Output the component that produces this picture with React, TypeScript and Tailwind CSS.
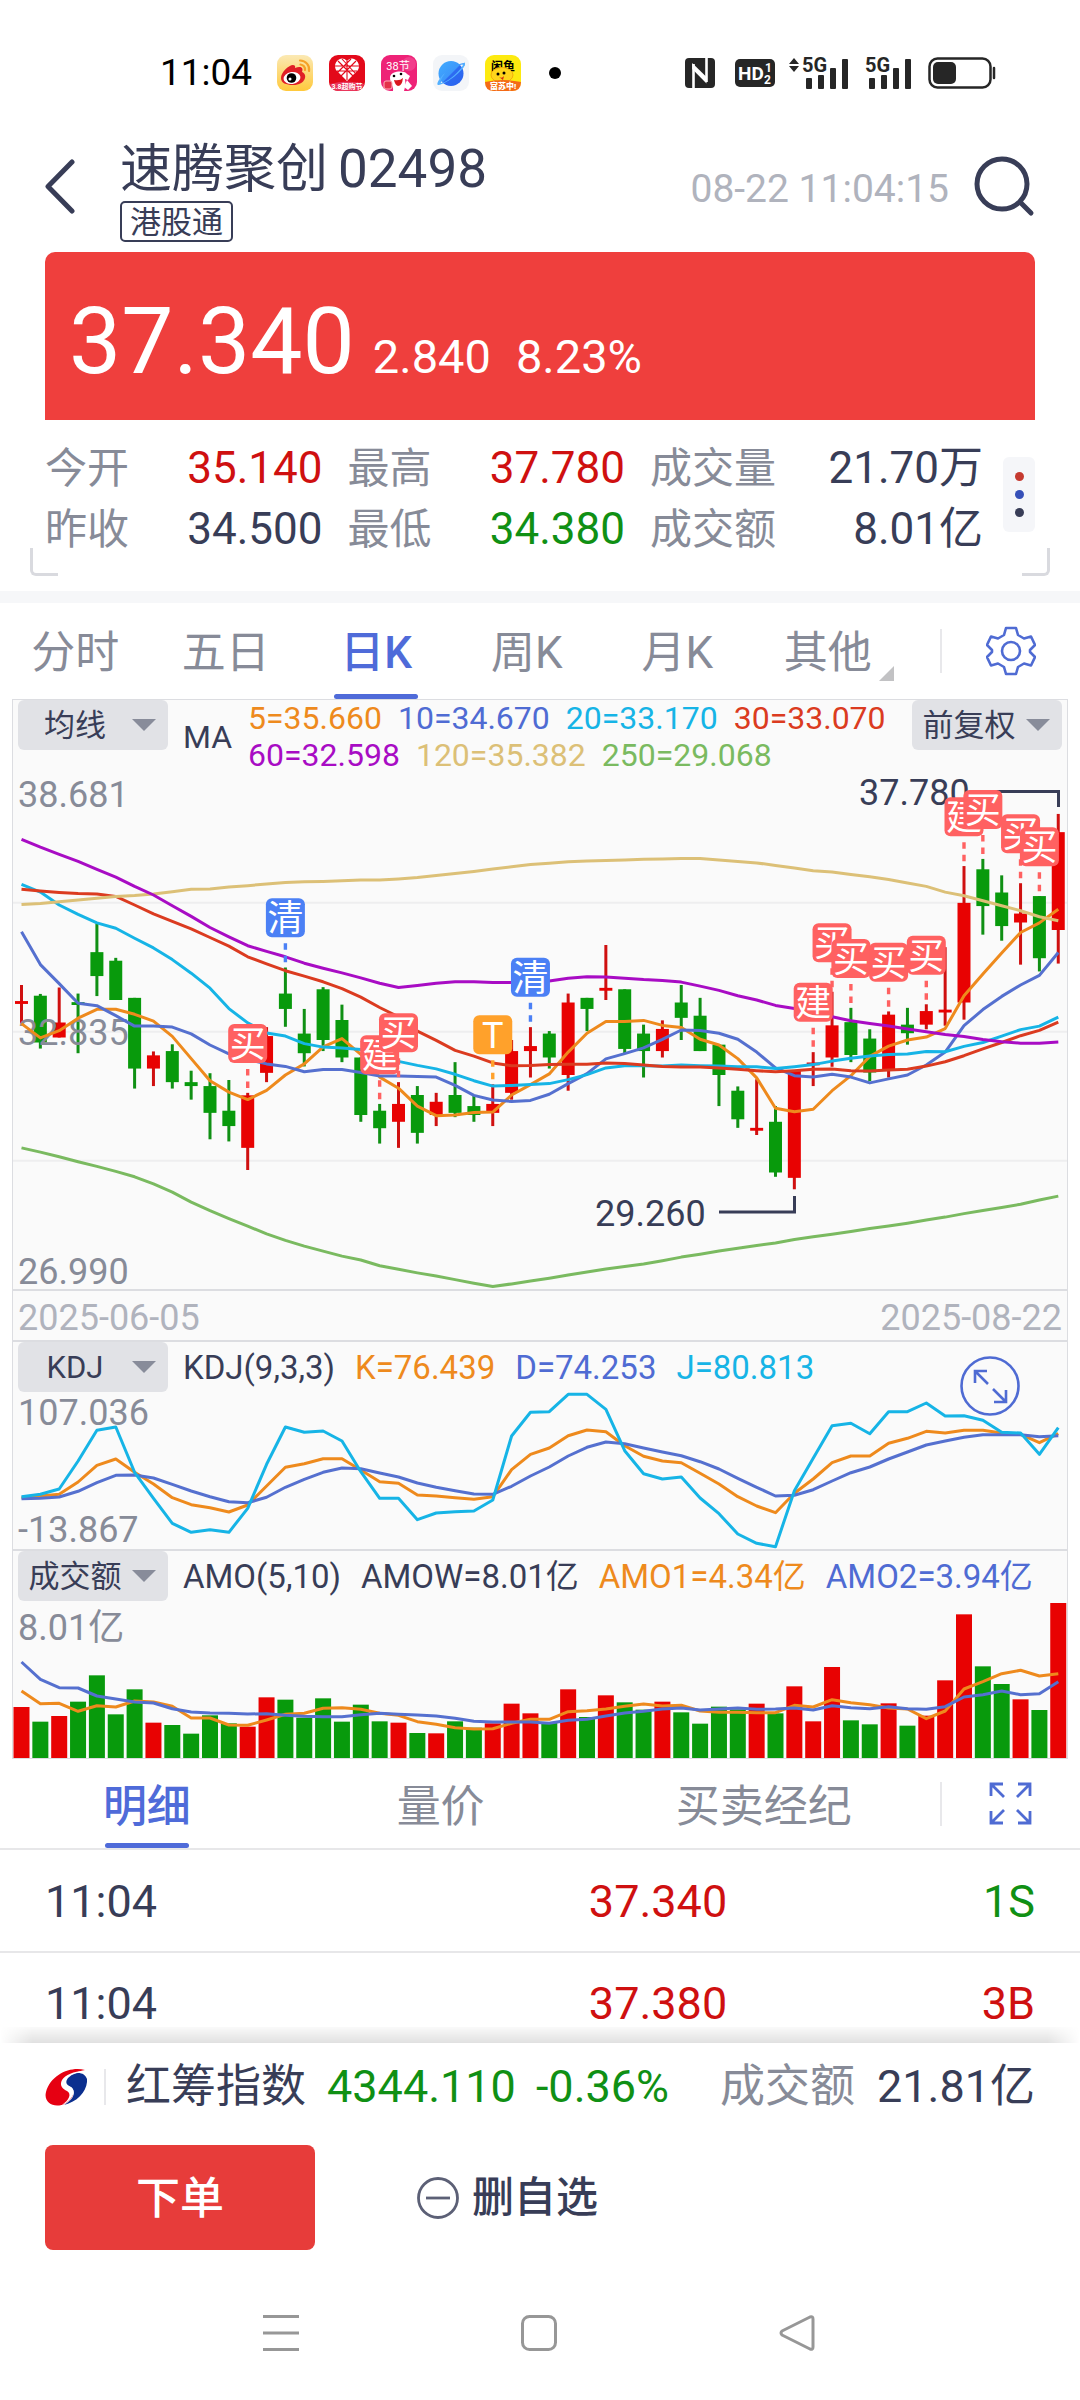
import React from "react";

type Candle = [number, number, number, number, 0 | 1];

// [high, body top, body bottom, low, rising] measured down the price panel
const candles: Candle[] = [
  [574, 619, 627, 682, 1], [599, 604, 735, 752, 0], [581, 679, 721, 721, 1], [598, 622, 630, 765, 0],
  [402, 482, 549, 605, 0], [498, 506, 616, 616, 0], [610, 610, 808, 864, 0], [760, 771, 808, 857, 1],
  [740, 759, 846, 864, 0], [814, 846, 857, 895, 0], [821, 857, 932, 1006, 0], [840, 926, 969, 1012, 0],
  [876, 883, 1030, 1092, 1], [692, 717, 820, 846, 1], [525, 598, 641, 691, 0], [641, 710, 765, 802, 0],
  [580, 586, 728, 759, 0], [629, 672, 777, 790, 0], [777, 777, 938, 957, 0], [907, 926, 975, 1018, 0],
  [846, 907, 957, 1030, 1], [857, 882, 988, 1018, 0], [876, 901, 938, 969, 1], [790, 882, 932, 944, 0],
  [882, 913, 938, 957, 0], [852, 907, 932, 969, 1], [728, 759, 876, 895, 1], [692, 745, 759, 833, 1],
  [703, 710, 777, 808, 0], [598, 623, 826, 870, 1], [610, 610, 641, 703, 0], [462, 582, 590, 616, 1],
  [586, 586, 753, 765, 0], [685, 710, 759, 833, 0], [673, 697, 759, 777, 1], [574, 623, 666, 728, 0],
  [610, 660, 759, 759, 0], [741, 741, 826, 913, 0], [858, 870, 950, 974, 0], [838, 974, 982, 994, 1],
  [913, 957, 1099, 1111, 0], [815, 815, 1114, 1146, 1], [762, 791, 799, 857, 1], [593, 687, 777, 803, 1],
  [638, 678, 770, 790, 0], [698, 724, 819, 843, 0], [648, 657, 811, 833, 1], [638, 685, 709, 741, 0],
  [628, 647, 685, 698, 1], [468, 643, 651, 688, 1], [241, 344, 623, 671, 1], [221, 250, 353, 433, 0],
  [267, 315, 409, 450, 0], [289, 374, 399, 517, 1], [325, 325, 499, 536, 0], [95, 146, 420, 514, 1],
];

const movingAverages: { color: string; points: number[] }[] = [
  {
    color: "#ee8a1d",
    points: [682, 722, 702, 667, 642, 642, 656, 675, 718, 780, 842, 874, 895, 869, 826, 795, 747, 724, 768, 832, 863, 913, 940, 938, 931, 930, 882, 853, 823, 762, 709, 676, 676, 673, 687, 693, 726, 742, 780, 834, 919, 929, 922, 870, 828, 774, 745, 728, 720, 696, 604, 543, 484, 427, 400, 362],
  },
  {
    color: "#5570cf",
    points: [425, 517, 570, 625, 632, 660, 689, 689, 692, 711, 742, 767, 782, 795, 802, 817, 811, 811, 819, 829, 829, 830, 832, 855, 883, 896, 900, 897, 880, 850, 822, 781, 766, 750, 726, 700, 701, 709, 726, 762, 806, 828, 832, 824, 832, 848, 837, 826, 798, 762, 688, 643, 606, 574, 547, 483],
  },
  {
    color: "#16b4e6",
    points: [292, 314, 350, 376, 400, 415, 443, 470, 503, 541, 583, 640, 680, 708, 717, 738, 748, 750, 755, 765, 788, 799, 809, 824, 842, 857, 855, 853, 850, 839, 825, 806, 800, 800, 801, 798, 800, 801, 803, 803, 808, 803, 797, 787, 779, 773, 769, 767, 760, 761, 746, 735, 717, 699, 689, 664],
  },
  {
    color: "#db3b20",
    points: [306, 311, 315, 318, 319, 326, 350, 375, 396, 417, 441, 465, 495, 515, 534, 549, 565, 584, 608, 637, 663, 703, 729, 757, 773, 792, 800, 799, 797, 796, 796, 792, 794, 798, 802, 804, 804, 806, 810, 814, 817, 814, 810, 809, 814, 815, 812, 810, 801, 789, 772, 753, 735, 716, 701, 678],
  },
  {
    color: "#dcc077",
    points: [349, 346, 341, 336, 331, 326, 323, 319, 313, 306, 305, 300, 296, 291, 287, 285, 284, 282, 280, 280, 277, 273, 267, 262, 256, 249, 243, 237, 233, 229, 227, 225, 224, 222, 221, 220, 220, 224, 228, 232, 239, 246, 254, 258, 265, 271, 279, 288, 298, 314, 324, 338, 352, 366, 383, 394],
  },
  {
    color: "#7aba60",
    points: [1030, 1042, 1055, 1069, 1082, 1096, 1111, 1131, 1154, 1182, 1206, 1228, 1249, 1271, 1289, 1305, 1319, 1333, 1344, 1360, 1370, 1380, 1389, 1399, 1409, 1418, 1411, 1403, 1395, 1386, 1378, 1369, 1362, 1355, 1346, 1336, 1328, 1319, 1311, 1303, 1296, 1287, 1279, 1272, 1264, 1256, 1249, 1241, 1232, 1224, 1214, 1205, 1197, 1188, 1176, 1165],
  },
  {
    color: "#a80cc4",
    points: [166, 188, 208, 228, 250, 272, 298, 322, 352, 382, 413, 439, 464, 480, 495, 513, 527, 540, 554, 569, 581, 575, 569, 565, 565, 567, 567, 567, 563, 555, 551, 552, 555, 559, 561, 566, 577, 589, 604, 616, 631, 640, 650, 663, 674, 682, 689, 697, 705, 713, 718, 727, 733, 737, 737, 734],
  },
];

// [bar index, top, glyph, colour]
const trades: [number, number, string, string][] = [
  [12, 683, "买", "#ff6161"],
  [14, 331, "清", "#4b80f5"],
  [19, 715, "建", "#ff6161"],
  [20, 653, "买", "#ff6161"],
  [25, 659, "T", "#ffa12b"],
  [27, 498, "清", "#4b80f5"],
  [43, 401, "买", "#ff6161"],
  [42, 568, "建", "#ff6161"],
  [44, 445, "买", "#ff6161"],
  [46, 456, "买", "#ff6161"],
  [48, 436, "买", "#ff6161"],
  [50, 48, "建", "#ff6161"],
  [51, 28, "买", "#ff6161"],
  [53, 96, "买", "#ff6161"],
  [54, 132, "买", "#ff6161"],
];

const kdj = {
  j: [650, 643, 627, 543, 451, 441, 577, 655, 730, 757, 749, 757, 685, 553, 441, 457, 453, 483, 575, 655, 655, 719, 699, 695, 693, 660, 468, 397, 395, 343, 343, 388, 512, 581, 597, 591, 654, 701, 762, 790, 800, 632, 535, 437, 430, 461, 395, 395, 369, 408, 407, 421, 457, 459, 523, 443],
  k: [653, 648, 643, 606, 556, 537, 577, 612, 653, 674, 683, 696, 675, 618, 562, 551, 536, 536, 570, 605, 610, 645, 648, 653, 658, 650, 569, 523, 504, 467, 450, 455, 497, 529, 543, 548, 580, 612, 650, 678, 698, 640, 597, 548, 528, 528, 490, 475, 454, 459, 451, 451, 459, 463, 488, 461],
  d: [656, 655, 651, 634, 608, 586, 585, 594, 613, 633, 650, 665, 668, 652, 622, 598, 577, 564, 566, 579, 591, 609, 622, 632, 642, 643, 619, 588, 561, 528, 502, 486, 491, 504, 516, 527, 545, 567, 595, 622, 648, 646, 629, 603, 578, 561, 537, 516, 495, 483, 472, 464, 464, 464, 470, 467],
};

const turnover = [1278, 1322, 1305, 1262, 1183, 1300, 1225, 1325, 1332, 1358, 1303, 1327, 1337, 1249, 1256, 1310, 1252, 1322, 1271, 1321, 1325, 1356, 1357, 1321, 1340, 1327, 1268, 1297, 1325, 1225, 1308, 1243, 1264, 1286, 1262, 1294, 1328, 1277, 1285, 1268, 1297, 1216, 1321, 1158, 1318, 1330, 1267, 1334, 1304, 1198, 1000, 1156, 1209, 1255, 1287, 966];
const turnoverMa5 = [1230, 1268, 1267, 1291, 1274, 1278, 1260, 1263, 1276, 1311, 1311, 1332, 1333, 1317, 1300, 1297, 1282, 1280, 1285, 1297, 1303, 1322, 1330, 1340, 1344, 1343, 1327, 1315, 1315, 1292, 1289, 1284, 1276, 1269, 1275, 1273, 1290, 1294, 1294, 1295, 1295, 1273, 1278, 1256, 1265, 1271, 1281, 1284, 1313, 1290, 1224, 1202, 1178, 1168, 1185, 1178];
const turnoverMa10 = [1143, 1195, 1220, 1221, 1245, 1254, 1263, 1266, 1283, 1293, 1296, 1297, 1299, 1298, 1303, 1306, 1307, 1307, 1301, 1297, 1300, 1302, 1305, 1312, 1321, 1323, 1323, 1323, 1327, 1318, 1315, 1305, 1296, 1291, 1284, 1281, 1287, 1284, 1281, 1285, 1284, 1281, 1287, 1274, 1280, 1283, 1277, 1283, 1285, 1277, 1248, 1241, 1230, 1241, 1238, 1202];

const UP = "#e80202";
const DOWN = "#089a0c";
const BLUE = "#4f6bd3";

const barX = (i: number) => 8.5 + 18.85 * i;
const priceY = (v: number) => v / 2.8 + 5;
const kdjY = (v: number) => v / 3 - 112;
const amoY = (v: number) => v / 3 - 320;
const toPoints = (values: number[], y: (v: number) => number) =>
  values.map((v, i) => `${barX(i).toFixed(1)},${y(v).toFixed(1)}`).join(" ");

function Line({ values, y, color }: { values: number[]; y: (v: number) => number; color: string }) {
  return <polyline points={toPoints(values, y)} fill="none" stroke={color} strokeWidth="3" strokeLinejoin="round" />;
}

function PriceChart() {
  return (
    <svg viewBox="0 0 1054 514" className="block w-full overflow-visible" role="img" aria-label="日K线图">
      {[344, 705, 1066].map((v) => (
        <line key={v} x1="0" x2="1054" y1={priceY(v)} y2={priceY(v)} stroke="#eeeeef" strokeWidth="2" />
      ))}
      {candles.map(([high, top, bottom, low, up], i) => (
        <g key={i} fill={up ? UP : DOWN}>
          <rect x={barX(i) - 1.5} y={priceY(high)} width="3" height={(low - high) / 2.8} fill={up ? "#cf1010" : "#109014"} />
          <rect x={barX(i) - 6.5} y={priceY(top)} width="13" height={(bottom - top) / 2.8} />
        </g>
      ))}
      <g fontSize="36" fill="#878b98">
        <text x="5" y="32">38.681</text>
        <text x="5" y="270">32.835</text>
        <text x="5" y="509">26.990</text>
      </g>
      {movingAverages.map((m) => (
        <Line key={m.color} values={m.points} y={priceY} color={m.color} />
      ))}
      <g fontSize="36" fill="#383d57">
        <text x="846" y="30">37.780</text>
        <text x="582" y="451">29.260</text>
      </g>
      <path d="M972 16.5H1045.5V32M706 437H781.5V421" fill="none" stroke="#383d57" strokeWidth="3" />
      {trades.map(([i, top, glyph, color]) => (
        <g key={i}>
          <path d={`M${barX(i)} ${priceY(top) + 45}v6.5M${barX(i)} ${priceY(top) + 57.5}v6.5`} stroke={color} strokeWidth="3.4" />
          <rect x={barX(i) - 19.5} y={priceY(top)} width="39" height="39" rx="6" fill={color} />
          <text x={barX(i)} y={priceY(top) + 33} fontSize="36" fill="#fff" textAnchor="middle">
            {glyph}
          </text>
        </g>
      ))}
    </svg>
  );
}

function KdjChart() {
  return (
    <svg viewBox="0 0 1054 157" className="block w-full overflow-visible" role="img" aria-label="KDJ">
      <g fontSize="36" fill="#878b98">
        <text x="5" y="33">107.036</text>
        <text x="5" y="150">-13.867</text>
      </g>
      <Line values={kdj.k} y={kdjY} color="#ee8a1d" />
      <Line values={kdj.d} y={kdjY} color="#5570cf" />
      <Line values={kdj.j} y={kdjY} color="#16b4e6" />
    </svg>
  );
}

function TurnoverChart() {
  return (
    <svg viewBox="0 0 1054 157" className="block w-full" role="img" aria-label="成交额">
      <text x="5" y="39" fontSize="36" fill="#878b98">8.01亿</text>
      {turnover.map((v, i) => (
        <rect key={i} x={barX(i) - 8} y={amoY(v)} width="16" height={157 - amoY(v)} fill={candles[i][4] ? UP : DOWN} />
      ))}
      <Line values={turnoverMa5} y={amoY} color="#ee8a1d" />
      <Line values={turnoverMa10} y={amoY} color="#5570cf" />
    </svg>
  );
}

function Picker({ label, value, options }: { label: string; value: string; options: string[] }) {
  return (
    <div className="relative h-[50px] w-[150px] shrink-0 rounded-md bg-[#e1e2e6]">
      <select
        aria-label={label}
        defaultValue={value}
        className="h-full w-full appearance-none bg-transparent pt-0.5 pr-9 text-center text-[31px] text-[#383d57]"
      >
        {options.map((o) => (
          <option key={o}>{o}</option>
        ))}
      </select>
      <svg viewBox="0 0 24 12" className="pointer-events-none absolute top-[19px] right-3 h-3 w-6">
        <path d="M0 0h24L12 12z" fill="#888c9a" />
      </svg>
    </div>
  );
}

function AppIcons() {
  return (
    <div className="flex items-center gap-4">
      <svg viewBox="0 0 36 36" className="size-9">
        <defs>
          <linearGradient id="weibo" x2="0" y2="1">
            <stop stopColor="#fbe9b4" />
            <stop offset="1" stopColor="#ffc93c" />
          </linearGradient>
        </defs>
        <rect width="36" height="36" rx="9" fill="url(#weibo)" />
        <path d="M4 23c0-6 8-13 12-13 3 0 2 3 2 3 5-2 9-1 7 4 6 2 4 13-9 13C9 30 4 28 4 23z" fill="#e01f26" />
        <ellipse cx="15" cy="23" rx="8.500" ry="6" fill="#fff" transform="rotate(-8 15 23)" />
        <circle cx="14.500" cy="23" r="4.800" />
        <circle cx="13" cy="24" r="1.500" fill="#fff" />
        <path d="M23 5.500a9 9 0 0 1 9 10.500M23.500 9.500a5 5 0 0 1 4.500 5.500" fill="none" stroke="#f6a127" strokeWidth="2.200" strokeLinecap="round" />
      </svg>
      <svg viewBox="0 0 36 36" className="size-9">
        <rect width="36" height="36" rx="9" fill="#e3091a" />
        <path d="M18 26L7 15C3 8 12-1 18 6c6-7 15 2 11 9z" fill="#fff" />
        <path d="M9 6l16 16M13 4l13 14M27 6L11 22M22 4L8 18M18 6v19M6 11h24M8 16h20" stroke="#e3091a" strokeWidth="1.100" />
        <path d="M1 29q17-5 34 0-1 7-9 7H10q-8 0-9-7z" fill="#e9365b" />
        <text x="18" y="33.500" fontSize="7" fontWeight="700" fill="#fff" textAnchor="middle">3.8超购节</text>
      </svg>
      <svg viewBox="0 0 36 36" className="size-9">
        <rect width="36" height="36" rx="9" fill="#ee2277" />
        <circle cx="28" cy="9" r="7" fill="#f657a0" opacity=".5" />
        <text x="17" y="15" fontSize="11" fill="#fff" textAnchor="middle">38节</text>
        <path d="M9 22c1-6 14-7 17-3l3 2-2 4-3-1c1 5 0 8-1 12H12c1-5-3-7-3-14z" fill="#fff" />
        <path d="M13 25q6 1 9-2-1 8-5 8-3-1-4-6z" fill="#d9151d" />
        <circle cx="13" cy="21" r="1.300" />
        <circle cx="20" cy="19" r="1.300" />
        <rect x="3" y="26" width="8" height="8" rx="2" fill="#e33149" stroke="#ffb0b8" />
        <path d="M26 25l5 6-4 4-4-3z" fill="#fff" />
      </svg>
      <svg viewBox="0 0 36 36" className="size-9">
        <defs>
          <linearGradient id="planet" x2="1" y2="1">
            <stop stopColor="#41adff" />
            <stop offset=".5" stopColor="#3d97fb" />
            <stop offset=".52" stopColor="#2d6cf2" />
            <stop offset="1" stopColor="#2a62ee" />
          </linearGradient>
        </defs>
        <rect width="36" height="36" rx="9" fill="#f3f5f8" />
        <circle cx="18" cy="18.500" r="12.500" fill="url(#planet)" />
        <path d="M5 29C9 20 22 9 31 8c3 0-1 6-6 11C33 11 31 8 27 10 19 13 11 20 8 27z" fill="#3f9dfb" />
        <path d="M6 30c-4 1 0-7 6-12-4 6-6 10-3 10 7-2 18-12 21-18 1-3 2-3 2-1-2 7-17 19-26 21z" fill="#53b1ff" />
      </svg>
      <svg viewBox="0 0 36 36" className="size-9">
        <rect width="36" height="36" rx="9" fill="#fdea10" />
        <text x="18" y="16" fontSize="12" fontWeight="700" textAnchor="middle">闲鱼</text>
        <ellipse cx="17" cy="20" rx="11" ry="7.500" fill="#ffd51c" stroke="#f3ad0c" />
        <circle cx="13" cy="19" r="1.500" />
        <circle cx="19" cy="18" r="1.500" />
        <path d="M14 22q3 2 5-1l-1 4z" fill="#d32a10" />
        <path d="M0 27q18-4 36 0 0 9-9 9H9q-9 0-9-9z" fill="#f46a16" />
        <text x="18" y="34" fontSize="8" fontWeight="900" fill="#fff" textAnchor="middle">富苏中!</text>
      </svg>
      <span className="ml-3 size-3 rounded-full bg-black" />
    </div>
  );
}

function Signal({ arrows }: { arrows?: boolean }) {
  return (
    <svg viewBox="0 -2 60 38" className="h-[38px] w-[60px] overflow-visible" fill="#262626">
      {arrows && <path d="M0 8l5-6 5 6zM0 10h10l-5 6z" />}
      <text x="13" y="16" fontSize="20" fontWeight="700" fontFamily="Roboto">5G</text>
      <rect x="17" y="22" width="6" height="11" rx="1" />
      <rect x="29" y="19" width="6" height="14" rx="1" />
      <rect x="41" y="12" width="6" height="21" rx="1" />
      <rect x="53" y="3" width="6" height="30" rx="1" />
    </svg>
  );
}

function StatusBar() {
  return (
    <div className="flex h-[132px] items-center pt-3.5 pr-[84px] pl-[160px]">
      <span className="mr-[25px] text-[37px] text-black">11:04</span>
      <AppIcons />
      <div className="ml-auto flex items-center">
        <svg viewBox="0 0 30 30" className="mr-5 size-[30px]">
          <rect width="30" height="30" rx="4" fill="#262626" />
          <path d="M8.500 30V6M21.500 24V0" fill="none" stroke="#fff" strokeWidth="2.600" />
          <path d="M7.200 5l14.300 14v6.500L7.200 11z" fill="#fff" />
        </svg>
        <svg viewBox="0 0 40 28" className="mr-3.5 h-7 w-10">
          <rect width="40" height="28" rx="5" fill="#262626" />
          <g fill="#fff" fontFamily="Roboto" fontWeight="700">
            <text x="3" y="21" fontSize="19">HD</text>
            <text x="30" y="13" fontSize="12">1</text>
            <text x="29" y="25" fontSize="12">2</text>
          </g>
        </svg>
        <Signal arrows />
        <div className="w-[3px]" />
        <Signal />
        <svg viewBox="0 0 68 32" className="ml-4 h-8 w-[68px]">
          <rect x="1.500" y="1.500" width="61" height="29" rx="8" fill="none" stroke="#262626" strokeWidth="2.500" />
          <rect x="5" y="5" width="23" height="22" rx="5" fill="#262626" />
          <path d="M66 11v10" stroke="#262626" strokeWidth="2.500" strokeLinecap="round" />
        </svg>
      </div>
    </div>
  );
}

function Header() {
  return (
    <header className="flex h-[120px] items-start px-[45px] pt-1.5">
      <button type="button" aria-label="返回" className="mt-[21px] mr-[45px] h-[55px] w-[30px]">
        <svg viewBox="0 0 30 55" fill="none" stroke="#383d57" strokeWidth="5" strokeLinecap="round" strokeLinejoin="round">
          <path d="M27 3L3 27.500 27 52" />
        </svg>
      </button>
      <div className="flex flex-col items-start">
        <h1 className="flex items-baseline gap-2.5 text-[52px] leading-[62px] text-[#383d57]">
          <span>速腾聚创</span>
          <span className="text-[53px]">02498</span>
        </h1>
        <span className="flex h-[41px] items-center rounded-[5px] border-2 border-[#383d57] px-2 pt-0.5 text-[31px] leading-none text-[#383d57]">
          港股通
        </span>
      </div>
      <time className="mt-[26px] ml-auto text-[39px] leading-[50px] text-[#b0b3bd]">08-22 11:04:15</time>
      <button type="button" aria-label="搜索" className="mt-[17px] ml-6 size-[62px]">
        <svg viewBox="0 0 62 62" fill="none" stroke="#383d57" strokeWidth="5" strokeLinecap="round">
          <circle cx="29" cy="29" r="25" />
          <path d="M48 48l10 10" />
        </svg>
      </button>
    </header>
  );
}

const stats: [string, string, string][] = [
  ["今开", "35.140", "text-[#cf1010]"],
  ["最高", "37.780", "text-[#cf1010]"],
  ["成交量", "21.70万", "text-[#383d57]"],
  ["昨收", "34.500", "text-[#383d57]"],
  ["最低", "34.380", "text-[#109014]"],
  ["成交额", "8.01亿", "text-[#383d57]"],
];

function Quote() {
  return (
    <section>
      <div className="mx-[45px] flex h-[168px] items-baseline rounded-t-[10px] bg-[#ef3f3d] px-6 pt-[43px] leading-none text-white">
        <span className="text-[93px] leading-none">37.340</span>
        <span className="ml-[18px] text-[47px]">2.840</span>
        <span className="ml-[25px] text-[47px]">8.23%</span>
      </div>
      <div className="relative flex h-[171px] items-start px-[45px] pt-[18px]">
        <dl className="grid flex-1 grid-cols-[5fr_5fr_6fr] gap-x-[25px]">
          {stats.map(([name, value, tone]) => (
            <div key={name} className="flex items-baseline justify-between leading-[60px]">
              <dt className="text-[42px] text-[#878b98]">{name}</dt>
              <dd className={`text-[44px] ${tone}`}>{value}</dd>
            </div>
          ))}
        </dl>
        <button
          type="button"
          aria-label="更多"
          className="mt-[19px] ml-5 flex h-[75px] w-8 flex-col items-center justify-center gap-[9px] rounded-md bg-[#f5f6f9]"
        >
          <span className="size-[9px] rounded-full bg-[#c53a30]" />
          <span className="size-[9px] rounded-full bg-[#3650b8]" />
          <span className="size-[9px] rounded-full bg-[#383d57]" />
        </button>
        <span className="absolute bottom-[15px] left-[30px] h-7 w-7 rounded-bl-md border-b-3 border-l-3 border-[#d9dadf]" />
        <span className="absolute right-[30px] bottom-[15px] h-7 w-7 rounded-br-md border-r-3 border-b-3 border-[#d9dadf]" />
      </div>
    </section>
  );
}

const periods = ["分时", "五日", "日K", "周K", "月K", "其他"];

function PeriodTabs() {
  return (
    <nav className="flex h-24 items-stretch">
      {periods.map((p) => (
        <button
          key={p}
          type="button"
          className={
            p === "日K"
              ? "relative flex-1 pt-1 text-[44px] font-medium text-[#4f6bd9]"
              : "relative flex-1 pt-1 text-[44px] text-[#878b98]"
          }
        >
          {p}
          {p === "日K" && <span className="absolute inset-x-0 bottom-0 mx-auto h-[5px] w-[84px] rounded-full bg-[#4f6bd9]" />}
          {p === "其他" && (
            <svg viewBox="0 0 15 15" className="absolute right-[9px] bottom-[18px] size-[15px]">
              <path d="M15 0v15H0z" fill="#c2c2c4" />
            </svg>
          )}
        </button>
      ))}
      <div className="flex w-[177px] items-center pl-[37px]">
        <span className="h-11 w-0.5 bg-[#e8e8eb]" />
        <button type="button" aria-label="设置" className="ml-11 size-[50px]">
          <svg viewBox="0 0 50 50" fill="none" stroke="#4f6bd3" strokeWidth="2.600" strokeLinejoin="round">
            <path d="M20 2h10l2 7 6 3.500 7-2 4 8.500-5 5v2l5 5-4 8.500-7-2-6 3.500-2 7H20l-2-7-6-3.500-7 2L1 31l5-5v-2l-5-5 4-8.500 7 2L18 9z" />
            <circle cx="25" cy="25" r="9" />
          </svg>
        </button>
      </div>
    </nav>
  );
}

function Charts() {
  return (
    <section className="mx-3 border border-[#dcdde1] bg-[#fafafa] text-[32px]">
      <div className="flex h-[75px] items-start px-[5px]">
        <Picker label="主图指标" value="均线" options={["均线", "BOLL"]} />
        <span className="mt-[18px] ml-[15px] w-[65px] leading-[38px] text-[#383d57]">MA</span>
        <div className="leading-[37px]">
          <div className="flex gap-4">
            <span className="text-[#ee8a1d]">5=35.660</span>
            <span className="text-[#4f6bd3]">10=34.670</span>
            <span className="text-[#16b4e6]">20=33.170</span>
            <span className="text-[#db3b20]">30=33.070</span>
          </div>
          <div className="flex gap-4">
            <span className="text-[#a80cc4]">60=32.598</span>
            <span className="text-[#dcc077]">120=35.382</span>
            <span className="text-[#7aba60]">250=29.068</span>
          </div>
        </div>
        <div className="ml-auto">
          <Picker label="复权方式" value="前复权" options={["前复权", "不复权", "后复权"]} />
        </div>
      </div>
      <PriceChart />
      <div className="flex h-[53px] items-center justify-between border-y-2 border-[#dcdde1] px-[5px] pt-1 text-[36px] leading-none text-[#b0b3bd]">
        <time>2025-06-05</time>
        <time>2025-08-22</time>
      </div>
      <div className="relative flex h-[50px] items-start px-[5px]">
        <Picker label="副图指标一" value="KDJ" options={["KDJ", "MACD", "RSI"]} />
        <div className="ml-[15px] flex gap-5 text-[33px] leading-[52px] whitespace-nowrap">
          <span className="text-[#383d57]">KDJ(9,3,3)</span>
          <span className="text-[#ee8a1d]">K=76.439</span>
          <span className="text-[#4f6bd3]">D=74.253</span>
          <span className="text-[#16b4e6]">J=80.813</span>
        </div>
        <button type="button" aria-label="展开图表" className="absolute top-3.5 right-[47px] size-[60px]">
          <svg viewBox="0 0 60 60" fill="none" stroke={BLUE} strokeWidth="2.600">
            <circle cx="30" cy="30" r="28.500" />
            <path d="M15 27V15h12M15 15l13 13M46 34v12H34M46 46L33 33" />
          </svg>
        </button>
      </div>
      <KdjChart />
      <div className="flex h-[52px] items-start border-t-2 border-[#dcdde1] px-[5px]">
        <Picker label="副图指标二" value="成交额" options={["成交额", "成交量"]} />
        <div className="ml-[15px] flex gap-5 text-[33px] leading-[51px] whitespace-nowrap">
          <span className="text-[#383d57]">AMO(5,10)</span>
          <span className="text-[#383d57]">AMOW=8.01亿</span>
          <span className="text-[#ee8a1d]">AMO1=4.34亿</span>
          <span className="text-[#4f6bd3]">AMO2=3.94亿</span>
        </div>
      </div>
      <TurnoverChart />
    </section>
  );
}

const ticks: [string, string, string, string][] = [
  ["11:04", "37.340", "1S", "text-[#109014]"],
  ["11:04", "37.380", "3B", "text-[#cf1010]"],
];

function Trades() {
  return (
    <section>
      <nav className="flex h-[91px] items-stretch border-b-2 border-[#e7e7e9] text-[44px] text-[#878b98]">
        <div className="grid flex-1 grid-cols-[5fr_5fr_6fr]">
          <button type="button" className="relative pt-1.5 font-medium text-[#4f6bd9]">
            明细
            <span className="absolute inset-x-0 bottom-0 mx-auto h-[5px] w-[84px] rounded-full bg-[#4f6bd9]" />
          </button>
          <button type="button" className="pt-1.5">量价</button>
          <button type="button" className="pt-1.5">买卖经纪</button>
        </div>
        <div className="flex w-[140px] items-center">
          <span className="h-11 w-0.5 bg-[#e8e8eb]" />
          <button type="button" aria-label="全屏" className="ml-[47px] size-[43px]">
            <svg viewBox="0 0 43 43" fill="none" stroke={BLUE} strokeWidth="2.800">
              <path d="M2 14V2h12M2 2l13 13M29 2h12v12M41 2L28 15M2 29v12h12M2 41l13-13M41 29v12H29M41 41L28 28" />
            </svg>
          </button>
        </div>
      </nav>
      <div className="h-[193px] overflow-hidden">
        <table className="w-full table-fixed text-[45px]">
          <tbody>
            {ticks.map(([time, price, volume, tone]) => (
              <tr key={price} className="h-[102px] border-b-2 border-[#e7e7e9]">
                <td className="w-[34%] pt-0.5 pl-[45px] text-[#383d57]">{time}</td>
                <td className="w-1/3 pt-0.5 text-right text-[#cf1010]">{price}</td>
                <td className={`pt-0.5 pr-[45px] text-right ${tone}`}>{volume}</td>
              </tr>
            ))}
          </tbody>
        </table>
      </div>
    </section>
  );
}

function Footer() {
  return (
    <footer className="relative bg-white">
      <div className="absolute inset-x-0 -top-4 h-4 bg-linear-to-b from-black/2 to-black/12 [mask-image:linear-gradient(to_right,transparent,black_3%,black_97%,transparent)]" />
      <div className="flex h-[87px] items-center px-[45px] text-[45px] leading-none whitespace-nowrap">
        <svg viewBox="0 0 42 38" className="h-[38px] w-[42px]">
          <path d="M40 2C26-2 6 6 1 24c-3 12 10 17 20 11 8-5 9-12 4-15-5-2-6-6-3-9 4-5 11-8 18-9z" fill="#e60012" />
          <path d="M24 8c-5 4-5 8 0 10 8 4 6 13-5 19C33 34 43 22 42 11 40 4 31 3 24 8z" fill="#0b2f8f" />
          <path d="M39 3C29 3 20 7 17 12c-3 6 1 9 5 11 5 3 2 9-5 14 10-4 15-14 9-18-5-2-6-5-3-9 4-4 10-6 16-7z" fill="#fff" />
        </svg>
        <span className="mr-5 ml-[17px] h-9 w-0.5 bg-[#e8e8eb]" />
        <span className="text-[#383d57]">红筹指数</span>
        <span className="ml-[21px] text-[#109014]">4344.110</span>
        <span className="ml-5 text-[#109014]">-0.36%</span>
        <span className="ml-auto text-[#878b98]">成交额</span>
        <span className="ml-[22px] text-[#383d57]">21.81亿</span>
      </div>
      <div className="flex items-center px-[45px] pt-[15px]">
        <button type="button" className="h-[105px] w-[270px] rounded-lg bg-[#e73c3a] pt-0.5 text-[44px] font-medium text-white">
          下单
        </button>
        <button type="button" className="ml-[102px] flex items-center gap-[13px] text-[42px] font-medium text-[#383d57]">
          <svg viewBox="0 0 42 42" className="size-[42px]" fill="none" stroke="#5c6076" strokeWidth="2.800">
            <circle cx="21" cy="21" r="19.500" />
            <path d="M9 21h24" />
          </svg>
          删自选
        </button>
      </div>
      <nav className="flex h-[150px] items-center justify-center gap-[222px] pt-4 pr-0.5">
        <button type="button" aria-label="最近任务" className="size-9">
          <svg viewBox="0 0 36 36" stroke="#979797" strokeWidth="3">
            <path d="M0 1.500h36M0 18h36M0 34.500h36" />
          </svg>
        </button>
        <button type="button" aria-label="主屏幕" className="size-9">
          <svg viewBox="0 0 36 36" fill="none" stroke="#979797" strokeWidth="3">
            <rect x="1.500" y="1.500" width="33" height="33" rx="7" />
          </svg>
        </button>
        <button type="button" aria-label="返回上一页" className="size-9">
          <svg viewBox="0 0 36 36" fill="none" stroke="#979797" strokeWidth="3" strokeLinejoin="round">
            <path d="M31 2L3 16q-2 2 0 4l28 14q3 1 3-2V4q0-3-3-2z" />
          </svg>
        </button>
      </nav>
    </footer>
  );
}

export default function App() {
  return (
    <main className="min-h-screen w-full bg-white font-[Roboto,'Noto_Sans_CJK_SC',sans-serif]">
      <StatusBar />
      <Header />
      <Quote />
      <div className="h-3 bg-[#f6f7f9]" />
      <PeriodTabs />
      <Charts />
      <Trades />
      <Footer />
    </main>
  );
}
